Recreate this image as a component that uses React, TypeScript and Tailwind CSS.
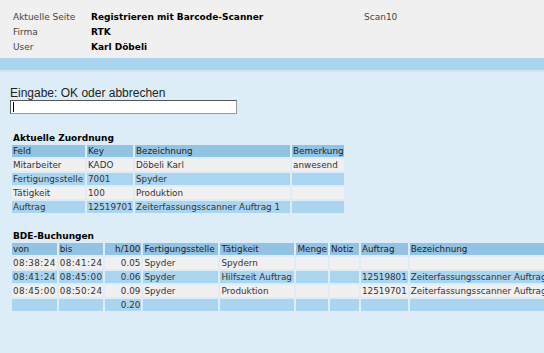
const zuordnung = [
  ['Mitarbeiter', 'KADO', 'Döbeli Karl', 'anwesend'],
  ['Fertigungsstelle', '7001', 'Spyder', ''],
  ['Tätigkeit', '100', 'Produktion', ''],
  ['Auftrag', '12519701', 'Zeiterfassungsscanner Auftrag 1', ''],
];

const buchungen = [
  ['08:38:24', '08:41:24', '0.05', 'Spyder', 'Spydern', '', '', '', ''],
  ['08:41:24', '08:45:00', '0.06', 'Spyder', 'Hilfszeit Auftrag', '', '', '12519801', 'Zeiterfassungsscanner Auftrag 1'],
  ['08:45:00', '08:50:24', '0.09', 'Spyder', 'Produktion', '', '', '12519701', 'Zeiterfassungsscanner Auftrag 1'],
  ['', '', '0.20', '', '', '', '', '', ''],
];

const rowBg = (i: number) => (i % 2 === 0 ? 'bg-[#f0f0f0]' : 'bg-[#aad5f1]');

export default function App() {
  return (
    <div className="w-[544px] h-[353px] overflow-hidden bg-[#dcedf7] text-[9px] text-[#333] font-['DejaVu_Sans',sans-serif]">
      {/* Kopfbereich */}
      <div className="h-[58px] bg-[#f0f0f0] pt-[10px] pl-[13px]">
        <div className="grid grid-cols-[78px_273px_auto] leading-[15px]">
          <span className="text-[#444]">Aktuelle Seite</span>
          <span className="font-bold text-black">Registrieren mit Barcode-Scanner</span>
          <span className="text-[#444]">Scan10</span>
          <span className="text-[#444]">Firma</span>
          <span className="font-bold text-black">RTK</span>
          <span />
          <span className="text-[#444]">User</span>
          <span className="font-bold text-black">Karl Döbeli</span>
          <span />
        </div>
      </div>
      <div className="h-[12px] bg-[#a9d4ef]" />
      <div className="h-[2px] bg-[#cde6f5]" />

      {/* Eingabe */}
      <div className="pl-[10px] pt-[14px]">
        <div className="font-['Liberation_Sans',sans-serif] text-[12px] leading-[14px] text-[#222]">
          Eingabe: OK oder abbrechen
        </div>
        <div className="relative w-[227px] h-[14px] bg-white border border-[#999] border-t-[#555] border-l-[#555]">
          <div className="absolute left-[2px] top-px w-px h-[10px] bg-black" />
        </div>
      </div>

      {/* Aktuelle Zuordnung */}
      <div className="pl-[10px] pt-[19px]">
        <div className="pl-[3px] font-bold text-black leading-[10px]">Aktuelle Zuordnung</div>
        <table className="w-max border-separate border-spacing-[2px] whitespace-nowrap leading-[12px] text-[8.8px]">
          <thead>
            <tr className="bg-[#93c3e2] text-[#222]">
              <th className="font-normal text-left pl-px h-[12px] w-[73px]">Feld</th>
              <th className="font-normal text-left pl-px w-[46px]">Key</th>
              <th className="font-normal text-left pl-px w-[155px]">Bezeichnung</th>
              <th className="font-normal text-left pl-px w-[51px]">Bemerkung</th>
            </tr>
          </thead>
          <tbody>
            {zuordnung.map((r, i) => (
              <tr key={i}>
                {r.map((c, j) => (
                  <td key={j} className={`${rowBg(i)} pl-px h-[12px]`}>
                    {c}
                  </td>
                ))}
              </tr>
            ))}
          </tbody>
        </table>
      </div>

      {/* BDE-Buchungen */}
      <div className="pl-[10px] pt-[16px]">
        <div className="pl-[3px] font-bold text-black leading-[10px]">BDE-Buchungen</div>
        <table className="w-max border-separate border-spacing-[2px] whitespace-nowrap leading-[12px] text-[8.8px]">
          <thead>
            <tr className="bg-[#93c3e2] text-[#222]">
              <th className="font-normal text-left px-px h-[12px] w-[43px]">von</th>
              <th className="font-normal text-left px-px w-[44px]">bis</th>
              <th className="font-normal text-right px-px w-[36px]">h/100</th>
              <th className="font-normal text-left px-px w-[75px]">Fertigungsstelle</th>
              <th className="font-normal text-left px-px w-[74px]">Tätigkeit</th>
              <th className="font-normal text-left px-px w-[31px]">Menge</th>
              <th className="font-normal text-left px-px w-[29px]">Notiz</th>
              <th className="font-normal text-left px-px w-[46px]">Auftrag</th>
              <th className="font-normal text-left px-px">Bezeichnung</th>
            </tr>
          </thead>
          <tbody>
            {buchungen.map((r, i) => (
              <tr key={i}>
                {r.map((c, j) => (
                  <td
                    key={j}
                    className={`${rowBg(i)} px-px h-[12px] ${j === 2 ? 'text-right' : ''} ${j < 2 ? 'tracking-[0.4px]' : ''}`}
                  >
                    {c}
                  </td>
                ))}
              </tr>
            ))}
          </tbody>
        </table>
      </div>
    </div>
  );
}
